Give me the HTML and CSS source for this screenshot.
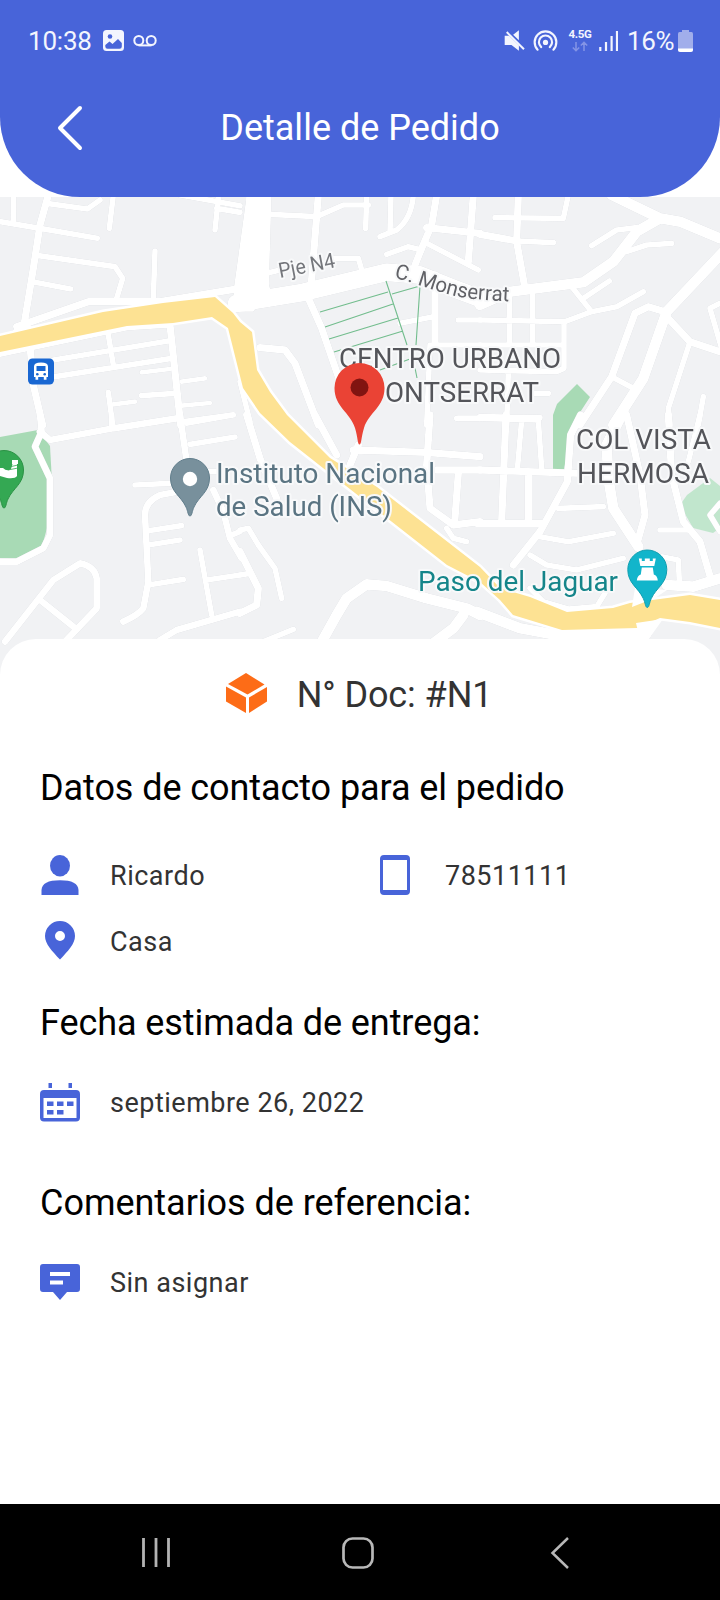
FILE: index.html
```html
<!DOCTYPE html>
<html lang="es">
<head>
<meta charset="utf-8">
<title>Detalle de Pedido</title>
<link rel="stylesheet" href="styles.css">
</head>
<body>
<div class="screen">
  <header class="header">
    <div class="status">
      <div class="status-left">
        <span class="time">10:38</span>
        <svg class="ic-image" viewBox="0 0 21 21"><rect width="21" height="21" rx="3.5" fill="#f3f5fe"/><circle cx="7" cy="6.5" r="2.3" fill="#4864d9"/><path d="M2.3 16.5V15L6.5 11.5L9.5 14L15 9L18.8 13V16.5Q18.8 18.7 16.5 18.7H4.5Q2.3 18.7 2.3 16.5Z" fill="#4864d9"/></svg>
        <svg class="ic-voice" viewBox="0 0 24 12"><g fill="none" stroke="#f3f5fe" stroke-width="2"><circle cx="5.8" cy="5.5" r="4.5"/><circle cx="18.2" cy="5.5" r="4.5"/><path d="M5.5 10.4H18.5"/></g></svg>
      </div>
      <div class="status-right">
        <svg class="ic-mute" viewBox="432 86 62 68"><path d="M434 106H447L476 134V150L454 133H434Z" fill="#f3f5fe"/><path d="M459 103L476 90V119Z" fill="#f3f5fe"/><path d="M440 95L491 146" stroke="#f3f5fe" stroke-width="6"/></svg>
        <svg class="ic-hotspot" viewBox="520 84 76 68"><g fill="none" stroke="#f3f5fe" stroke-width="6.500" stroke-linecap="round"><path d="M534 146A33 33 0 1 1 582 146"/><path d="M545 138A20 20 0 1 1 571 138"/></g><circle cx="558" cy="124" r="8" fill="#f3f5fe"/></svg>
        <div class="net"><span class="net-label">4.5G</span><svg class="ic-arrows" viewBox="0 0 16 11"><path d="M4 1V9.5M.8 6.5L4 9.7L7.2 6.5M12 10V1.5M8.8 4.5L12 1.3L15.2 4.5" fill="none" stroke="#8494e6" stroke-width="1.5"/></svg></div>
        <svg class="ic-signal" viewBox="0 0 19 20"><path d="M1.3 16V20M7 11V20M12.6 5V20M18 0V20" stroke="#f3f5fe" stroke-width="2.200"/></svg>
        <span class="percent">16%</span>
        <svg class="ic-battery" viewBox="0 0 15 22"><path d="M4 0H11V2H13.5Q15 2 15 4V19.500Q15 22 12.500 22H2.500Q0 22 0 19.500V4Q0 2 1.500 2H4Z" fill="#a1aeeb"/><path d="M0 18.500H15V19.500Q15 22 12.500 22H2.500Q0 22 0 19.500Z" fill="#fff"/></svg>
      </div>
    </div>
    <div class="titlebar">
      <svg class="back" viewBox="0 0 26 46"><path d="M23 3L3 23L23 43" fill="none" stroke="#fff" stroke-width="4" stroke-linecap="round" stroke-linejoin="round"/></svg>
      <h1 class="title">Detalle de Pedido</h1>
    </div>
  </header>

  <svg class="map" viewBox="0 197 720 478">
    <defs>
      <path id="monserrat" d="M394 278C418 283 444 296 474 299Q495 301 525 302"/>
    </defs>
    <rect y="197" width="720" height="478" fill="#f1f2f4"/>
    <g fill="#a8dab5">
      <path d="M0 437L38 430L50 446L52 482L47 528L42 547L20 560L0 558Z"/>
      <path d="M553 470V415L557 404L577 384L590 397L575 420L564 469Z"/>
      <path d="M710 478L720 486V528L713 533L693 528L680 505L687 495Z" fill="#c1e6cd"/>
    </g>
    <g class="roads">
      <g transform="translate(0 195) scale(.33333)">
        <path class="w22" d="M145 0L120 90L100 220L72 390M510 390L542 690M90 450L100 570L128 690M50 395L265 320L480 320L720 280"/>
        <path class="w16" d="M40 0V80M0 80L120 100L292 130M140 25L262 42L300 15M115 182L345 215L368 250L350 310M105 262L212 282M340 0L328 100M465 168L460 310M650 40L720 52M655 10L645 105M540 0L720 32M325 420L340 510M160 495L505 438M165 545L515 490M425 602L525 595M325 592L338 690M0 478L380 398L510 390"/>
        <path class="w14" d="M425 532L510 522M545 560L615 550M545 632L630 624M340 628L405 620M540 680L700 658"/>
        <path d="M25 420L72 370L100 400Z" fill="#fff"/>
      </g>
      <g transform="translate(240 195) scale(.33333)">
        <path class="w76" d="M58 -40L48 300"/>
        <path d="M20 0L-18 275L-20 350H40L90 280Z" fill="#fff"/>
        <path class="w50" d="M-10 325L190 292L290 268L440 232L540 240L640 280L720 310"/>
        <path class="w22" d="M235 0L212 290M590 0L575 90L545 160L525 210M560 98L720 115M700 0L685 200M205 310L245 400L300 560M60 458L135 465L165 505L235 690M585 240V450"/>
        <path class="w16" d="M90 58L230 65L310 30L385 30M380 0L377 100M453 0L450 110M520 0Q515 70 470 105L420 125M440 178L505 155L545 165M560 145L715 225M285 190L355 190L368 235M570 450L560 690M480 385L580 365M655 375H720M590 450H720M650 670H720M0 560L30 680M80 235L120 225"/>
      </g>
      <g transform="translate(480 195) scale(.33333)">
        <path class="w32" d="M395 0L540 70L600 80L720 130M0 330L90 290L310 262L400 200L470 110L540 70M730 170L560 350L490 550L400 690"/>
        <path class="w22" d="M115 0L110 140L135 280M555 350L505 335L465 355L395 545L300 690M560 365L630 440L720 470M0 118L110 138"/>
        <path class="w16" d="M45 68L250 70L265 0M110 138L220 143M335 152L410 105L470 98M440 170L500 150L575 145M275 275L335 350M310 310L388 258M0 375L255 380L335 350L410 335L490 290M88 300V440M158 300V440M252 380V520L230 530L0 525M0 450H250M395 545L460 580M630 440L565 640L570 690M720 325L690 340L725 460M670 605L655 690M85 530L80 690M160 595H205M0 665L180 668"/>
      </g>
      <g transform="translate(0 415) scale(.33333)">
        <path class="w20" d="M120 0L125 50L105 95L150 190L150 360L130 400L50 440L0 440M120 50L150 75L340 40L530 10M540 0L560 140M480 675L530 645L720 590M640 225L670 290L690 370L725 430M15 680L160 495L240 445Q285 455 290 490L290 580L195 680M120 555L220 635M560 225L480 240Q435 260 435 300L445 500L430 580Q415 600 370 620"/>
        <path class="w16" d="M335 0V30M560 25L700 0M570 88L705 66M405 210L510 205M440 348L545 332M445 390L540 375M445 510L550 493M600 405L635 600M620 495L720 480M695 360L720 350M620 170H650"/>
      </g>
      <g transform="translate(240 415) scale(.33333)">
        <path class="w32" d="M240 690L290 600L320 550L380 508L440 513L560 550L680 580L720 600M670 600L640 640L580 685"/>
        <path class="w22" d="M20 0L60 130L110 250M225 0L290 120M340 105L555 112L720 125M355 90L330 150M570 0L560 150L570 280L640 330L720 320M590 165H720M655 175L645 310M0 410L55 520L50 570L0 595"/>
        <path class="w16" d="M620 340L640 370L680 380M655 10H720M0 345L25 340L55 390L105 460L125 550M0 480L30 475M70 680L160 643"/>
      </g>
      <g transform="translate(480 415) scale(.33333)">
        <path class="w32" d="M430 -10L380 90L385 190L400 280L475 395M-10 590L120 640L250 664L500 655M560 510L640 515L720 490"/>
        <path class="w22" d="M78 0L65 320M0 165L300 175M-10 325H190M145 180V325M302 0L272 60L262 200L180 350L100 450M440 0L480 180L495 300L470 390M565 0L575 180L610 320L660 380L695 500"/>
        <path class="w16" d="M0 10L175 15L185 160M125 15L112 165M235 280L370 275M180 365L265 380L400 355M150 420L200 450L290 465L430 430M150 520L190 560L265 582L350 575L375 535M540 345H620M660 0L625 140M545 425L595 435L598 500M720 265L690 300L720 350"/>
      </g>
    </g>
    <path d="M0 336L103 312L163 303L215 297L233 313L240 322L252 332L257 370L270 392L287 415L330 458L377 487L480 567L500 588L530 597L567 612L613 608L630 603L690 595L720 600V628L690 622L660 618L637 628L562 630L513 615L500 600L480 582L447 565L387 518L323 468L290 442L260 413L243 388L228 328L212 317L173 323L127 326L0 352Z" fill="#fde293" stroke="#fff" stroke-width="5" paint-order="stroke"/>
    <path d="M635 588L667 590L655 598L632 607ZM636 623L663 619L648 640H640Z" fill="#fff"/>
    <path d="M320 312L388 292M325 327L393 304M329 339L398 318M334 352L403 331M386 281L407 345M392 294L420 286L416 345M380 370L410 359M415 368L417 378" fill="none" stroke="#72bd8d" stroke-width="1.1"/>

    <g class="labels">
      <text transform="translate(280 278) rotate(-11)" class="street" textLength="57" lengthAdjust="spacingAndGlyphs" fill="#75777c">Pje N4</text>
      <text class="street" fill="#606166"><textPath href="#monserrat" textLength="118" lengthAdjust="spacingAndGlyphs">C. Monserrat</textPath></text>
      <g fill="#54555a">
        <text x="339" y="368" textLength="222" lengthAdjust="spacingAndGlyphs">CENTRO URBANO</text>
        <text x="385" y="402" textLength="154" lengthAdjust="spacingAndGlyphs">ONTSERRAT</text>
        <text x="576" y="449" textLength="135" lengthAdjust="spacingAndGlyphs">COL VISTA</text>
        <text x="577" y="483" textLength="132" lengthAdjust="spacingAndGlyphs">HERMOSA</text>
      </g>
      <g fill="#5a7482">
        <text x="216" y="482.500" textLength="219" lengthAdjust="spacingAndGlyphs">Instituto Nacional</text>
        <text x="216" y="516" textLength="176" lengthAdjust="spacingAndGlyphs">de Salud (INS)</text>
      </g>
      <text x="418" y="590.500" textLength="200" lengthAdjust="spacingAndGlyphs" fill="#15858a">Paso del Jaguar</text>
    </g>

    <g class="pins">
      <g transform="translate(41 371.500)"><rect x="-13" y="-13" width="26" height="26" rx="4.500" fill="#1967d2"/><path d="M-7 -5Q-7 -9 0 -9Q7 -9 7 -5V5.500H5.500V8.300H2.800V5.500H-2.800V8.300H-5.500V5.500H-7Z" fill="#fff"/><path d="M-4.500 -5.500H4.500V-.500H-4.500Z" fill="#1967d2"/><circle cx="-3.700" cy="2.700" r="1.300" fill="#1967d2"/><circle cx="3.700" cy="2.700" r="1.300" fill="#1967d2"/></g>
      <g transform="translate(190 478)"><path d="M0 38C-2 38 -2 33 -4 29C-9 18 -19.500 14 -19.500 0A19.500 19.500 0 0 1 19.500 0C19.500 14 9 18 4 29C2 33 2 38 0 38Z" fill="#78909c" stroke="#607d8b"/><circle r="7.200" cy="1" fill="#fff"/></g>
      <g transform="translate(4 470)"><path d="M0 38C-2 38 -2 33 -4 29C-9 18 -19.500 14 -19.500 0A19.500 19.500 0 0 1 19.500 0C19.500 14 9 18 4 29C2 33 2 38 0 38Z" fill="#34a853" stroke="#2a9144"/><path d="M-8 -2H-1Q3 2 7 -1L8.500 -6H13V6Q11 9 3 8L-8 5Z" fill="#fff"/><path d="M8 -10H14V-6H8Z" fill="#fff"/><path d="M5 -3L14 -5M4 0L14 -2" stroke="#34a853" stroke-width=".8"/></g>
      <g transform="translate(647.300 569.500)"><path d="M0 38C-2 38 -2 33 -4 29C-9 18 -19.500 14 -19.500 0A19.500 19.500 0 0 1 19.500 0C19.500 14 9 18 4 29C2 33 2 38 0 38Z" fill="#12b5cb" stroke="#129eaf"/><path d="M-8.500 -11H-5.500V-8.500H-2.500V-11H2.500V-8.500H5.500V-11H8.500L7 -3.500H-7ZM-5.500 -2H5.500L6.500 5Q10 6 10.500 11H-10.500Q-10 6 -6.500 5Z" fill="#fff"/></g>
      <path d="M359.500 444.500C357.500 444.500 358 438 355 428C350 412 334.500 407 334.500 388A25 25 0 0 1 384.500 388C384.500 407 369 412 364 428C361 438 361.500 444.500 359.500 444.500Z" fill="#ea4335"/><circle cx="359.500" cy="387.500" r="9" fill="#811411"/>
    </g>
  </svg>

  <main class="card">
    <div class="doc">
      <svg class="ic-box" viewBox="0 0 41 40"><g fill="#fd6c17"><path d="M20 0L38.500 11.500L21.500 21.500L2 11Z"/><path d="M0 13.500L20 24.500V40L0 28.500Z"/><path d="M23 24.500L41 14V28.500L23 40Z"/></g></svg>
      <span class="doc-number">N° Doc: #N1</span>
    </div>
    <h2 class="heading contact-heading">Datos de contacto para el pedido</h2>
    <div class="contacts">
      <div class="row">
        <svg class="icon" viewBox="0 0 40 40"><g fill="#4864d9"><ellipse cx="20" cy="10.700" rx="10" ry="10.700"/><path d="M1.500 40V35Q2 25.300 20 25.300Q38 25.300 38.500 35V40Z"/></g></svg>
        <span>Ricardo</span>
      </div>
      <div class="row">
        <svg class="icon" viewBox="0 0 40 40"><path fill-rule="evenodd" d="M9 0H31Q35 0 35 4V36Q35 40 31 40H9Q5 40 5 36V4Q5 0 9 0ZM8 5V35H32V5Z" fill="#4864d9"/></svg>
        <span class="phone">78511111</span>
      </div>
      <div class="row">
        <svg class="icon" viewBox="0 0 40 40"><path fill-rule="evenodd" d="M20 0A15 15 0 0 1 35 15C35 23 28 30 20 38.500C12 30 5 23 5 15A15 15 0 0 1 20 0ZM20 10A5 5 0 1 0 20 20A5 5 0 1 0 20 10Z" fill="#4864d9"/></svg>
        <span>Casa</span>
      </div>
    </div>
    <h2 class="heading">Fecha estimada de entrega:</h2>
    <div class="row detail">
      <svg class="icon" viewBox="0 0 40 40"><g fill="#4864d9"><path d="M8.500 0H12V5H8.500ZM28.500 0H32V5H28.500Z"/><path fill-rule="evenodd" d="M4 7H36Q40 7 40 11V34.500Q40 38.500 36 38.500H4Q0 38.500 0 34.500V11Q0 7 4 7ZM3.500 15V35H36.500V15Z"/><path d="M7 18.500H13.500V23H7ZM17 18.500H23.500V23H17ZM27 18.500H33.500V23H27ZM7 27H13.500V31.500H7ZM17 27H23.500V31.500H17Z"/></g></svg>
      <span>septiembre 26, 2022</span>
    </div>
    <h2 class="heading comments-heading">Comentarios de referencia:</h2>
    <div class="row detail">
      <svg class="icon" viewBox="0 0 40 40"><path fill-rule="evenodd" d="M3 1H37Q40 1 40 4V26Q40 29 37 29H27L20 37L13 29H3Q0 29 0 26V4Q0 1 3 1ZM10 9V13H30V9ZM10 17.500V21.500H23V17.500Z" fill="#4864d9"/></svg>
      <span>Sin asignar</span>
    </div>
  </main>

  <nav class="nav">
    <svg class="nav-icon" viewBox="0 0 32 32"><path d="M3.500 1V30M16 1V30M28.500 1V30" stroke="#b3b3b3" stroke-width="2.800"/></svg>
    <svg class="nav-icon" viewBox="0 0 32 32"><rect x="1.500" y="1.500" width="29" height="29" rx="9" fill="none" stroke="#b8b8b8" stroke-width="2.700"/></svg>
    <svg class="nav-icon" viewBox="0 0 32 32"><path d="M24 1L8.500 16L24 31" fill="none" stroke="#b8b8b8" stroke-width="2.500"/></svg>
  </nav>
</div>
</body>
</html>
```
FILE: styles.css
```css
* { box-sizing: border-box; }
body { margin: 0; background: #fff; font-family: Roboto, sans-serif; }
svg { display: block; flex: none; }
.screen { width: 720px; height: 1600px; display: flex; flex-direction: column; overflow: hidden; }

.header { height: 197px; flex: none; background: #4864d9; border-radius: 0 0 80px 80px; color: #fff; }
.status { height: 81px; padding: 0 27px 0 28px; display: flex; justify-content: space-between; align-items: center; color: #f3f5fe; font-size: 26px; line-height: 40px; }
.status-left, .status-right { display: flex; align-items: center; }
.time { width: 75px; letter-spacing: -.2px; }
.ic-image { width: 21px; height: 21px; }
.ic-voice { width: 24px; height: 12px; margin-left: 9px; }
.ic-mute { width: 21px; height: 23px; }
.ic-hotspot { width: 25px; height: 23px; margin-left: 8px; }
.net { width: 24px; margin-left: 10px; display: flex; flex-direction: column; align-items: center; gap: 1px; }
.net-label { font-size: 11.5px; line-height: 11px; font-weight: 700; letter-spacing: -.3px; }
.ic-arrows { width: 16px; height: 11px; }
.ic-signal { width: 19px; height: 20px; margin-left: 7px; }
.percent { width: 51px; margin-left: 9px; white-space: nowrap; letter-spacing: -.4px; }
.ic-battery { width: 15px; height: 22px; }

.titlebar { height: 93px; padding: 0 57px; display: grid; grid-template-columns: 26px 1fr 26px; align-items: center; }
.back { width: 26px; height: 46px; }
.title { margin: 0; text-align: center; font-size: 36px; line-height: 48px; font-weight: 400; }

.map { width: 720px; height: 478px; }
.roads { filter: drop-shadow(0 0 .6px #c9ccd2); }
.roads path[class] { fill: none; stroke: #fff; stroke-linecap: round; stroke-linejoin: round; }
.w14 { stroke-width: 14; }
.w16 { stroke-width: 17; }
.w20 { stroke-width: 20; }
.w22 { stroke-width: 22; }
.w32 { stroke-width: 32; }
.w50 { stroke-width: 54; }
.w76 { stroke-width: 76; }
.labels text { font-size: 27px; stroke: #f8f9fa; stroke-width: 4px; stroke-linejoin: round; paint-order: stroke; }
.labels .street { font-size: 21px; }

.card { flex: 1; position: relative; margin-top: -36px; padding: 0 40px; background: #fff; border-radius: 36px 36px 0 0; color: #333; font-size: 27px; letter-spacing: .5px; }
.doc { height: 112px; padding-right: 2px; display: flex; justify-content: center; align-items: center; gap: 30px; font-size: 36px; letter-spacing: -.1px; }
.ic-box { width: 41px; height: 40px; margin-top: -5px; }
.heading { height: 60px; margin: 18px 0 20px; color: #000; font-size: 36px; line-height: 60px; font-weight: 400; letter-spacing: -.08px; }
.contact-heading { margin: 7px 0 25px; }
.comments-heading { margin-top: 40px; letter-spacing: -.03px; }
.contacts { display: grid; grid-template-columns: 335px 1fr; grid-auto-rows: 66px; }
.row { display: flex; align-items: center; gap: 30px; }
.detail { height: 60px; }
.icon { width: 40px; height: 40px; margin-top: -3px; }
.detail .icon { margin-top: -1px; }

.nav { height: 96px; flex: none; padding: 0 144px 0 140px; background: #000; display: flex; justify-content: space-between; align-items: center; }
.nav-icon { width: 32px; height: 32px; margin-top: 2px; }
```
